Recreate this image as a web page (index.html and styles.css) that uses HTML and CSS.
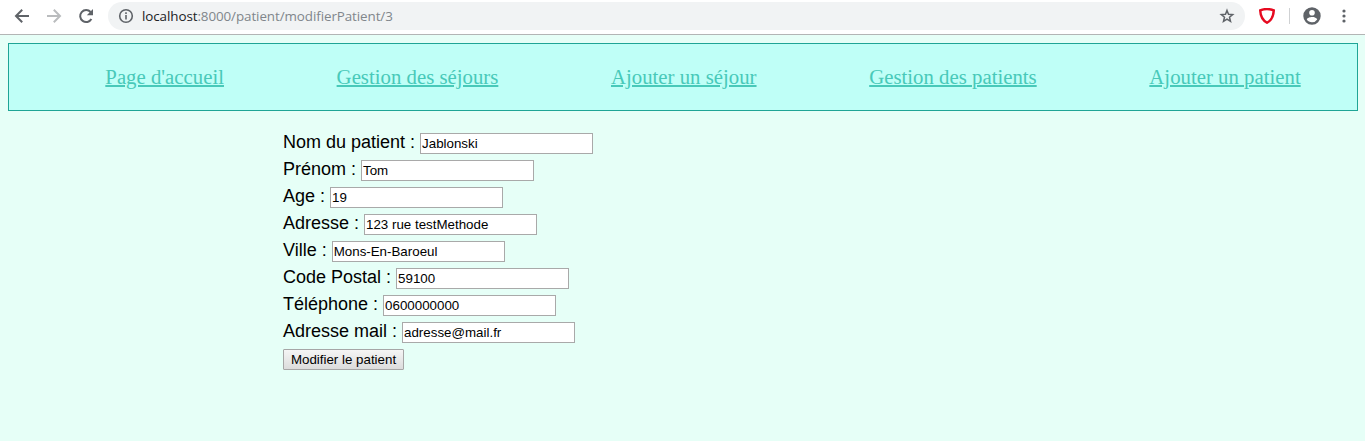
FILE: index.html
```html
<!DOCTYPE html>
<html lang="fr">
<head>
<meta charset="utf-8">
<title>Modifier le patient</title>
<link rel="stylesheet" href="styles.css">
</head>
<body>
<header class="toolbar">
  <svg class="icon back" viewBox="0 0 16 16"><path d="M15 8H2M8.2 1.8 2 8l6.2 6.2"/></svg>
  <svg class="icon forward" viewBox="0 0 16 16"><path d="M1 8h13M7.8 1.8 14 8l-6.2 6.2"/></svg>
  <svg class="icon reload" viewBox="0 0 16 16"><path d="M13.4 11A6 6 0 1 1 12.6 4"/><path class="solid" d="M15 1v6.2H8.8z"/></svg>
  <div class="address">
    <svg class="icon info" viewBox="0 0 16 16"><circle cx="8" cy="8" r="6.3"/><path d="M8 7v4.6M8 4.3v1.7"/></svg>
    <span class="url"><span class="host">localhost</span>:8000/patient/modifierPatient/3</span>
    <svg class="icon star" viewBox="0 0 16 16"><path d="m8 2.4 1.5 3.9 4.2.3-3.2 2.7 1 4.1L8 11.2l-3.5 2.2 1-4.1-3.2-2.7 4.2-.3z"/></svg>
  </div>
  <svg class="icon shield" viewBox="0 0 16 16"><path d="M1.2 2.4Q8-.4 14.8 2.4 14.4 11.2 8 14.8 1.6 11.2 1.2 2.4z"/></svg>
  <span class="divider"></span>
  <svg class="icon account" viewBox="0 0 18 18"><path fill-rule="evenodd" d="M9 .3a8.7 8.7 0 1 0 0 17.4A8.7 8.7 0 0 0 9 .3zM9 3a2.8 2.8 0 1 1 0 5.6A2.8 2.8 0 0 1 9 3zm0 12.3c-2.2 0-4.1-1.1-5.2-2.8 0-1.7 3.5-2.6 5.2-2.6s5.2.9 5.2 2.6A6.2 6.2 0 0 1 9 15.3z"/></svg>
  <svg class="icon more" viewBox="0 0 4 16"><circle cx="2" cy="3" r="1.6"/><circle cx="2" cy="8" r="1.6"/><circle cx="2" cy="13" r="1.6"/></svg>
</header>
<main class="page">
  <nav class="menu">
    <a href="#">Page d'accueil</a>
    <a href="#">Gestion des séjours</a>
    <a href="#">Ajouter un séjour</a>
    <a href="#">Gestion des patients</a>
    <a href="#">Ajouter un patient</a>
  </nav>
  <form class="patient">
    <label class="row">Nom du patient : <input class="field" value="Jablonski"></label>
    <label class="row">Prénom : <input class="field" value="Tom"></label>
    <label class="row">Age : <input class="field" value="19"></label>
    <label class="row">Adresse : <input class="field" value="123 rue testMethode"></label>
    <label class="row">Ville : <input class="field" value="Mons-En-Baroeul"></label>
    <label class="row">Code Postal : <input class="field" value="59100"></label>
    <label class="row">Téléphone : <input class="field" value="0600000000"></label>
    <label class="row">Adresse mail : <input class="field" value="adresse@mail.fr"></label>
    <button class="submit" type="button">Modifier le patient</button>
  </form>
</main>
</body>
</html>
```

FILE: styles.css
```css
* { box-sizing: border-box; }

body {
  margin: 0;
  height: 441px;
  overflow: hidden;
  background: #e6fff7;
}

.toolbar {
  display: flex;
  align-items: center;
  height: 35px;
  padding: 0 0 3px 14px;
  background: #fff;
  border-bottom: 1px solid #b3b5b5;
}

.icon {
  flex: none;
  width: 16px;
  height: 16px;
  fill: none;
  stroke: #5f6368;
  stroke-width: 2;
}
.forward { margin-left: 16px; stroke: #babcbe; }
.reload { margin-left: 16px; }
.reload .solid { fill: #5f6368; stroke: none; }

.address {
  display: flex;
  align-items: center;
  width: 1137px;
  height: 28px;
  margin-left: 14px;
  padding: 0 10px;
  border-radius: 14px;
  background: #f1f3f4;
}
.info { stroke-width: 1.6; }
.url {
  flex: 1;
  margin-left: 8px;
  font: 13.4px/20px "Open Sans", "Noto Sans", sans-serif;
  letter-spacing: -0.08px;
  color: #80868b;
}
.host { color: #202124; }
.star { stroke-width: 1.5; }

.shield { margin-left: 14px; stroke: #e60a20; stroke-width: 2.4; }
.divider { width: 1px; height: 16px; margin: 0 13px 0 14px; background: #cfd1d3; }
.account { width: 18px; height: 18px; fill: #5f6368; stroke: none; }
.more { width: 4px; margin-left: 21px; fill: #5f6368; stroke: none; }

.page { padding: 8px 7px 0 8px; }

.menu {
  display: flex;
  justify-content: space-around;
  align-items: center;
  height: 68px;
  padding-left: 40px;
  border: 1px solid #1fa596;
  background: #bffff7;
  font: 20.8px/24px "Liberation Serif", "Times New Roman", serif;
}
.menu a {
  color: #48c9b9;
  text-decoration-thickness: 2px;
}

.patient {
  margin: 18px 0 0 275px;
  font: 18px/21px "Liberation Sans", Arial, sans-serif;
  color: #000;
}
.row {
  display: block;
  height: 27px;
  line-height: 27px;
}
.field {
  width: 173px;
  height: 21px;
  margin: 0;
  padding: 1px;
  border: 1px solid #a9a9a9;
  background: #fff;
  color: #000;
  font: 13.333px "Liberation Sans", Arial, sans-serif;
}
.submit {
  display: block;
  width: 121px;
  height: 21px;
  margin-top: 4px;
  padding: 0;
  border: 1px solid #a6a6a6;
  border-radius: 1px;
  background: linear-gradient(#f5f5f5, #dcdcdc);
  color: #000;
  font: 13.333px "Liberation Sans", Arial, sans-serif;
}
```
